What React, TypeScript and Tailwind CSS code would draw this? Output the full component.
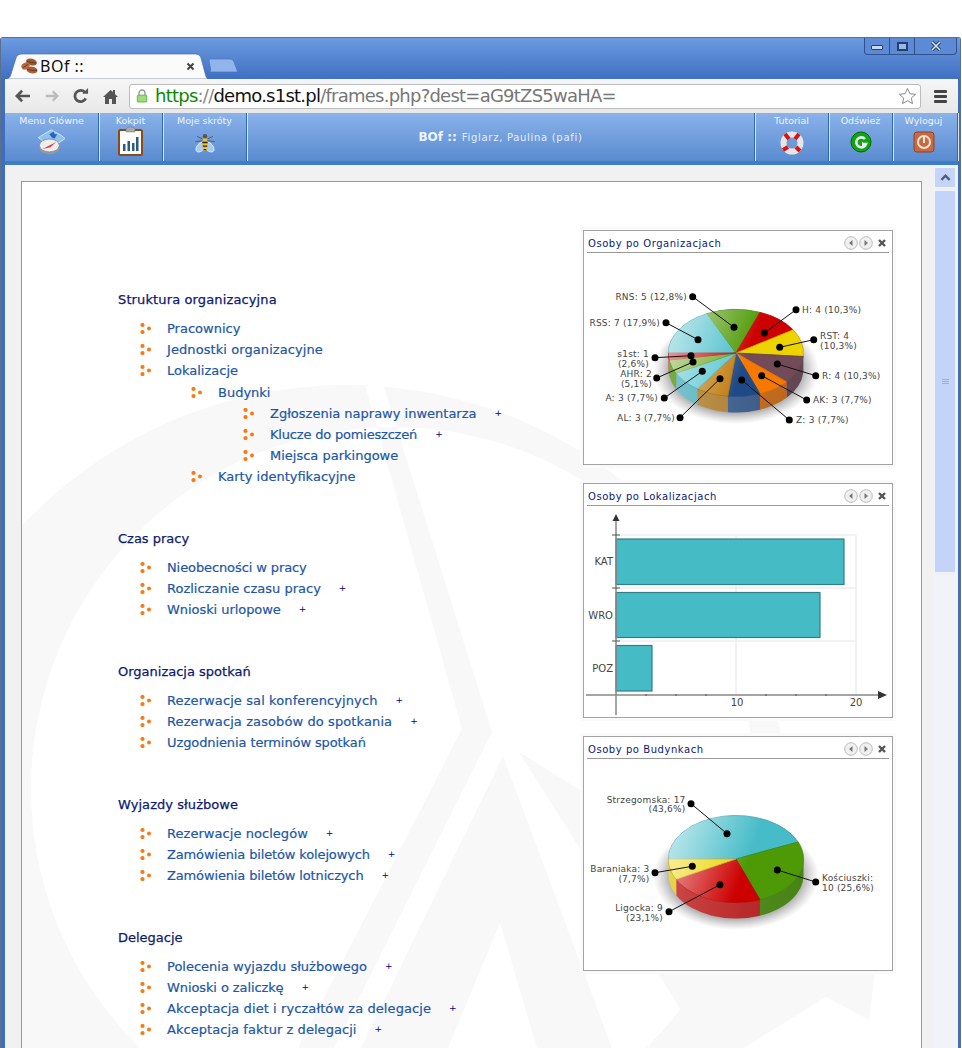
import React from "react";

const F = "font-['DejaVu_Sans',sans-serif]";

function polar(cx: number, cy: number, rx: number, ry: number, deg: number) {
  const t = (deg * Math.PI) / 180;
  return [cx + rx * Math.cos(t), cy + ry * Math.sin(t)];
}

type Slice = { v: number; top: string; side: string; stroke: string };
type Lab = { lines: string[]; x: number; ys: number[]; end?: boolean; d: [number, number]; to: [number, number] };

function Pie({ id, cy, slices, labels }: { id: string; cy: number; slices: Slice[]; labels: Lab[] }) {
  const cx = 736, rx = 67.5, ry = 43.5, depth = 16;
  const total = slices.reduce((a, s) => a + s.v, 0);
  let ang = 180;
  const segs = slices.map((s) => {
    const a0 = ang;
    const a1 = ang + (s.v / total) * 360;
    ang = a1;
    return { ...s, a0, a1 };
  });
  const sidePath = (a0: number, a1: number) => {
    const [x0, y0] = polar(cx, cy, rx, ry, a0);
    const [x1, y1] = polar(cx, cy, rx, ry, a1);
    return `M${x0} ${y0}A${rx} ${ry} 0 0 1 ${x1} ${y1}L${x1} ${y1 + depth}A${rx} ${ry} 0 0 0 ${x0} ${y0 + depth}Z`;
  };
  return (
    <>
      <defs>
        <radialGradient id={id + "s"} cx="50%" cy="50%" r="50%">
          <stop offset="70%" stopColor="#555" stopOpacity="0.75" />
          <stop offset="100%" stopColor="#888" stopOpacity="0" />
        </radialGradient>
        <linearGradient id={id + "g"} gradientUnits="userSpaceOnUse" x1="668" y1={cy - 20} x2="745" y2={cy + 10}>
          <stop offset="0%" stopColor="#fff" stopOpacity="0.65" />
          <stop offset="100%" stopColor="#fff" stopOpacity="0" />
        </linearGradient>
        <linearGradient id={id + "w"} x1="0" y1="0" x2="1" y2="0">
          <stop offset="0%" stopColor="#fff" stopOpacity="0.18" />
          <stop offset="100%" stopColor="#000" stopOpacity="0.08" />
        </linearGradient>
      </defs>
      <ellipse cx={cx} cy={cy + 17} rx={83} ry={54} fill={`url(#${id}s)`} />
      {segs.map((s, i) => {
        const a0 = Math.max(s.a0, 360);
        const a1 = Math.min(s.a1, 540);
        if (a1 <= a0) return null;
        return <path key={i} d={sidePath(a0, a1)} fill={s.side} />;
      })}
      <path d={sidePath(360, 540)} fill={`url(#${id}w)`} />
      {segs.map((s, i) => {
        const [x0, y0] = polar(cx, cy, rx, ry, s.a0);
        const [x1, y1] = polar(cx, cy, rx, ry, s.a1);
        const large = s.a1 - s.a0 > 180 ? 1 : 0;
        return (
          <path
            key={i}
            d={`M${cx} ${cy}L${x0} ${y0}A${rx} ${ry} 0 ${large} 1 ${x1} ${y1}Z`}
            fill={s.top}
            stroke={s.stroke}
            strokeWidth="0.8"
          />
        );
      })}
      <ellipse cx={cx} cy={cy} rx={rx} ry={ry} fill={`url(#${id}g)`} />
      {labels.map((l, i) => (
        <g key={i}>
          <line x1={l.d[0]} y1={l.d[1]} x2={l.to[0]} y2={l.to[1]} stroke="#111" strokeWidth="1" />
          <circle cx={l.d[0]} cy={l.d[1]} r="3.5" fill="#000" />
          <circle cx={l.to[0]} cy={l.to[1]} r="3.5" fill="#000" />
          {l.lines.map((t, j) => (
            <text key={j} x={l.x} y={l.ys[j]} textAnchor={l.end ? "end" : "start"} fontSize="9" fill="#444" fontFamily="'DejaVu Sans',sans-serif" className="tracking-[0.2px]">
              {t}
            </text>
          ))}
        </g>
      ))}
    </>
  );
}

function Nav({ dir }: { dir: "l" | "r" }) {
  return (
    <svg width="14" height="14" viewBox="0 0 14 14">
      <circle cx="7" cy="7" r="6.3" fill="#f0f0f0" stroke="#bbb" />
      <path d={dir === "l" ? "M8.5 4v6L5 7z" : "M5.5 4v6L9 7z"} fill="#777" />
    </svg>
  );
}

function Card({ title, viewBox, children }: { title: string; viewBox: string; children: React.ReactNode }) {
  return (
    <div className="w-[310px] h-[235px] border border-[#a3a3a3] bg-white px-[3px] flex flex-col shadow-[0_0_0_3px_#fafafa]">
      <div className="h-[21px] mt-px border-b border-[#999] flex items-center justify-between pl-px pr-[2px]">
        <span className={`${F} text-[10px] tracking-[0.55px] text-[#0a1a7a] leading-none pt-[4px]`}>{title}</span>
        <span className="flex items-center gap-[1px] mt-[2px]">
          <Nav dir="l" />
          <Nav dir="r" />
          <svg width="10" height="10" viewBox="0 0 10 10" className="ml-[3px]">
            <path d="M2 2l6 6M8 2l-6 6" stroke="#555" strokeWidth="2.4" />
          </svg>
        </span>
      </div>
      <svg viewBox={viewBox} className="w-[308px] h-[211px] block -mx-[3px]">
        {children}
      </svg>
    </div>
  );
}

function Bullet() {
  return (
    <svg width="11" height="11" viewBox="0 0 11 11" className="shrink-0">
      <circle cx="2.5" cy="2" r="2.1" fill="#f97a10" />
      <circle cx="2.5" cy="9" r="2.1" fill="#f97a10" />
      <circle cx="9" cy="5.5" r="2" fill="#f97a10" />
    </svg>
  );
}

function Item({ text, plus, level = 0, tw = "" }: { text: string; plus?: boolean; level?: 0 | 1 | 2; tw?: string }) {
  const indent = level === 0 ? "pl-[22px]" : level === 1 ? "pl-[73px]" : "pl-[125px]";
  return (
    <div className={`${indent} gap-[16px] h-[21px] flex items-center`}>
      <Bullet />
      <span className={`${F} ${tw} text-[13px] leading-[21px] text-[#2156a6] [-webkit-text-stroke:0.2px_#2156a6] whitespace-nowrap`}>{text}</span>
      {plus && <span className={`${F} text-[9px] leading-none text-[#00007f] ml-[2px]`}>+</span>}
    </div>
  );
}

function Section({ title, children, tw = "" }: { title: string; children: React.ReactNode; tw?: string }) {
  return (
    <div className="mb-[41px]">
      <div className={`${F} ${tw} text-[13px] leading-[21px] text-[#0b1a70] [-webkit-text-stroke:0.25px_#0b1a70] mb-[8px] whitespace-nowrap`}>{title}</div>
      {children}
    </div>
  );
}

function Cell({ w, label, children }: { w: string; label: string; children: React.ReactNode }) {
  return (
    <div className={`${w} h-[48px] flex flex-col items-center pt-px border-r border-r-[#2f67b5] shadow-[1px_0_0_#dbe7f7]`}>
      <span className={`${F} text-[9.5px] leading-[14px] text-[#eef4fc] whitespace-nowrap`}>{label}</span>
      <span className="block">{children}</span>
    </div>
  );
}

export default function App() {
  const org: Slice[] = [
    { v: 7, top: "#45bcc8", side: "#5bb7c2", stroke: "#3aa0ac" },
    { v: 5, top: "#4f9a06", side: "#4f9a06", stroke: "#3f8a06" },
    { v: 4, top: "#cc0000", side: "#b22", stroke: "#cc0000" },
    { v: 4, top: "#edd400", side: "#d6c100", stroke: "#c4a000" },
    { v: 4, top: "#724a58", side: "#6a4c5a", stroke: "#644" },
    { v: 3, top: "#f57900", side: "#cf6f1c", stroke: "#e57000" },
    { v: 3, top: "#204a87", side: "#3b5f92", stroke: "#204a87" },
    { v: 3, top: "#c17d11", side: "#b88532", stroke: "#a86c0e" },
    { v: 3, top: "#55c5d2", side: "#5bb9c6", stroke: "#42a5b2" },
    { v: 2, top: "#6aa820", side: "#5c9a1a", stroke: "#4f8a06" },
    { v: 1, top: "#cc0000", side: "#c22", stroke: "#a00" },
  ];
  const bud: Slice[] = [
    { v: 17, top: "#45bcc8", side: "#5bb7c2", stroke: "#3aa0ac" },
    { v: 10, top: "#4e9a06", side: "#4f8f18", stroke: "#3f8a06" },
    { v: 9, top: "#cc0000", side: "#c42222", stroke: "#b00" },
    { v: 3, top: "#edd400", side: "#e2cb20", stroke: "#c4a000" },
  ];
  const orgL: Lab[] = [
    { lines: ["RNS: 5 (12,8%)"], x: 687, ys: [300], end: true, d: [692.7, 296.7], to: [734, 327.3] },
    { lines: ["H: 4 (10,3%)"], x: 802, ys: [313], d: [796, 309.7], to: [764.3, 333] },
    { lines: ["RST: 4", "(10,3%)"], x: 820, ys: [339, 349], d: [813.7, 339.7], to: [779.7, 347.3] },
    { lines: ["R: 4 (10,3%)"], x: 822, ys: [379], d: [815.7, 375.7], to: [777.3, 364] },
    { lines: ["AK: 3 (7,7%)"], x: 813, ys: [403], d: [806.7, 400], to: [761.7, 375.7] },
    { lines: ["Z: 3 (7,7%)"], x: 796, ys: [423], d: [789.3, 420], to: [741.7, 380] },
    { lines: ["AL: 3 (7,7%)"], x: 675, ys: [421], end: true, d: [680, 417.7], to: [720, 378.7] },
    { lines: ["A: 3 (7,7%)"], x: 658, ys: [401], end: true, d: [664.3, 398], to: [702.3, 371.3] },
    { lines: ["AHR: 2", "(5,1%)"], x: 652, ys: [377, 387], end: true, d: [656.7, 378], to: [693, 362] },
    { lines: ["s1st: 1", "(2,6%)"], x: 649, ys: [357, 367], end: true, d: [655, 357.7], to: [691, 355.7] },
    { lines: ["RSS: 7 (17,9%)"], x: 660, ys: [326], end: true, d: [666, 322.7], to: [698, 339.7] },
  ];
  const budL: Lab[] = [
    { lines: ["Strzegomska: 17", "(43,6%)"], x: 685.5, ys: [803, 812], end: true, d: [691, 803.7], to: [727, 833.7] },
    { lines: ["Kościuszki:", "10 (25,6%)"], x: 822, ys: [881, 891], d: [815.7, 882], to: [777.3, 870] },
    { lines: ["Baraniaka: 3", "(7,7%)"], x: 649.5, ys: [872, 882], end: true, d: [655, 872.7], to: [692.3, 866.3] },
    { lines: ["Ligocka: 9", "(23,1%)"], x: 663, ys: [911, 921], end: true, d: [669, 911.7], to: [720, 884.7] },
  ];

  return (
    <div className="w-[962px] h-[1048px] overflow-hidden bg-white pt-[37px]">
      <div className="h-[1011px] mr-px border border-b-0 border-[#5c6f8c] rounded-t-[3px] bg-[#3f6ebd] flex flex-col">
        {/* title bar */}
        <div className="h-[41px] shrink-0 bg-gradient-to-b from-[#6c9be0] to-[#3f6fc2] flex pl-[4px] pr-[3px]">
          <div className="relative w-[203px] h-[26px] mt-[15px] flex items-center pl-[16px]">
            <svg width="203" height="26" viewBox="0 0 203 26" className="absolute left-0 top-0">
              <path d="M0 26C3 26 5 25 6 21L11 5C12 2 14 1 18 1H190C193 1 195 2 196 5L200 20C201 24 202 26 203 26Z" fill="#fbfbfb" stroke="#3c62a8" strokeWidth="0.6" />
            </svg>
            <svg width="17" height="16" viewBox="0 0 17 16" className="relative mr-[2px]">
              <ellipse cx="10.500" cy="4" rx="5.500" ry="3.400" fill="#9b5a33" transform="rotate(15 10.500 4)" />
              <ellipse cx="4.500" cy="8" rx="4.300" ry="3.300" fill="#b5693f" transform="rotate(-25 4.500 8)" />
              <ellipse cx="11" cy="12" rx="5.500" ry="3.400" fill="#a66038" transform="rotate(10 11 12)" />
              <path d="M6 3.500q4 1 9 1.500M2 9.500q3-2 5-3M6 11.500q4 1 10 1" stroke="#5d3219" strokeWidth="0.800" fill="none" />
            </svg>
            <span className="relative font-['Noto_Sans',sans-serif] text-[16px] tracking-[0.5px] leading-none text-[#111]">BOf ::</span>
            <svg width="9" height="9" viewBox="0 0 9 9" className="absolute left-[181px] top-[9px]">
              <path d="M1.500 1.500l6 6M7.500 1.500l-6 6" stroke="#444" strokeWidth="2" />
            </svg>
          </div>
          <svg width="31" height="15" viewBox="0 0 31 15" className="mt-[20px]">
            <path d="M1 14C2 14 3 13 2.500 10L1 3C1 1 2 1 4 1H22C24 1 25 2 26 4L29 12C29.500 14 30 14 30 14Z" fill="#8fb5ec" stroke="#4a74bd" strokeWidth="0.7" />
          </svg>
          <div className="ml-auto flex h-[17px] border border-t-0 border-[#30518e] rounded-b-[4px] bg-[#5d8ad4]">
            <div className="w-[25px] flex items-center justify-center border-r border-[#30518e]">
              <div className="w-[12px] h-[5px] border border-[#24406f] bg-[#c9d8f0] rounded-[1px] mt-[3px]" />
            </div>
            <div className="w-[25px] flex items-center justify-center border-r border-[#30518e]">
              <div className="w-[11px] h-[9px] border-2 border-[#24406f] bg-[#9ab9e8]" />
            </div>
            <div className="w-[41px] flex items-center justify-center">
              <svg width="12" height="10" viewBox="0 0 12 10">
                <path d="M2 1l8 8M10 1l-8 8" stroke="#24406f" strokeWidth="3.4" />
                <path d="M2 1l8 8M10 1l-8 8" stroke="#dce6f6" strokeWidth="1.5" />
              </svg>
            </div>
          </div>
        </div>
        {/* frame body */}
        <div className="flex-1 pl-[4px] pr-[2px] flex flex-col min-h-0">
          {/* toolbar */}
          <div className="h-[34px] shrink-0 bg-gradient-to-b from-[#f6f6f6] to-[#e8e8e8] flex items-center pl-[10px] pr-[11px]">
            <svg width="16" height="14" viewBox="0 0 18 16">
              <path d="M8 2L2 8l6 6M2.500 8H17" stroke="#555" strokeWidth="3" fill="none" />
            </svg>
            <svg width="14" height="14" viewBox="0 0 18 16" className="ml-[14px]">
              <path d="M10 2l6 6-6 6M15.500 8H1" stroke="#bbb" strokeWidth="3" fill="none" />
            </svg>
            <svg width="16" height="16" viewBox="0 0 17 17" className="ml-[14px]">
              <path d="M13.500 11A6 6 0 1 1 12.500 4.500" stroke="#555" strokeWidth="3" fill="none" />
              <path d="M10 6h6V0z" fill="#555" />
            </svg>
            <svg width="15" height="15" viewBox="0 0 15 15" className="ml-[14px]">
              <path d="M7.500 1L0 8h2v7h4v-5h3v5h4V8h2l-3-3V1h-2v2z" fill="#555" />
            </svg>
            <div className="ml-[11px] w-[792px] h-[25px] bg-white border border-[#bcbcbc] rounded-[3px] flex items-center pl-[6px] pr-[3px] shrink-0">
              <svg width="12" height="16" viewBox="0 0 14 16" className="mr-[7px] shrink-0">
                <path d="M3.500 7V4.500a3.500 3.500 0 0 1 7 0V7" stroke="#9a9a9a" strokeWidth="1.6" fill="none" />
                <rect x="1.500" y="7" width="11" height="8" rx="1" fill="#9fdb7a" stroke="#5ea544" />
              </svg>
              <span className={`${F} text-[18px] leading-none whitespace-nowrap tracking-[-0.76px]`}>
                <span className="text-[#0a8a00]">https</span>
                <span className="text-[#888]">://</span>
                <span className="text-[#111]">demo.s1st.pl</span>
                <span className="text-[#777]">/frames.php?dest=aG9tZS5waHA=</span>
              </span>
              <svg width="19" height="18" viewBox="0 0 19 18" className="ml-auto">
                <path d="M9.500 1.500l2.400 5.200 5.600.6-4.200 3.800 1.200 5.500-5-2.900-5 2.900 1.200-5.500L1.500 7.300l5.600-.6z" fill="#fff" stroke="#888" />
              </svg>
            </div>
            <div className="ml-auto flex flex-col gap-[2px]">
              <div className="w-[13px] h-[3px] bg-[#444] rounded-[1px]" />
              <div className="w-[13px] h-[3px] bg-[#444] rounded-[1px]" />
              <div className="w-[13px] h-[3px] bg-[#444] rounded-[1px]" />
            </div>
          </div>
          {/* app header */}
          <div className="h-[52px] shrink-0 bg-gradient-to-b from-[#8ab2ea] to-[#5a8bd0] border-b-[4px] border-b-[#3f7dc2] flex">
            <Cell w="w-[94px]" label="Menu Główne">
              <svg width="32" height="26" viewBox="0 0 34 30" className="mt-[1px]">
                <path d="M1 10L16 1l11 6 5 4-14 10z" fill="#8cc1f0" stroke="#dceaf8" />
                <path d="M14 6l5-3 1 3 3 0-3 5-3-1z" fill="#2a62c4" />
                <ellipse cx="14" cy="21" rx="12" ry="8" fill="#9a9a9a" />
                <ellipse cx="14" cy="19" rx="11.500" ry="7.500" fill="#eee" stroke="#888" />
                <path d="M6 23L22 15l-7 6z" fill="#d33" />
              </svg>
            </Cell>
            <Cell w="w-[64px]" label="Kokpit">
              <svg width="25" height="30" viewBox="0 0 25 30" className="-mt-[2px]">
                <rect x="1" y="4" width="23" height="25" rx="1.500" fill="#fff" stroke="#8a4a1a" strokeWidth="2" />
                <path d="M8 4q0-3 4.500-3T17 4v2H8z" fill="#aaa" stroke="#777" strokeWidth="0.5" />
                <path d="M5 25v-7h2.500v7zM9.500 25V15H12v10zM14 25v-8h2.500v8zM18 25V11h2.500v14z" fill="#2c5a82" />
              </svg>
            </Cell>
            <Cell w="w-[84px]" label="Moje skróty">
              <svg width="22" height="23" viewBox="0 0 24 26" className="mt-[3px]">
                <path d="M12 12C5 12 1 18 2 22c1 3 7 2 10-3 3 5 9 6 10 3 1-4-3-10-10-10z" fill="#a9ccf2" stroke="#e5effa" />
                <ellipse cx="12" cy="15" rx="3" ry="8" fill="#f0c020" />
                <path d="M9 13h6M9.500 17h5M10.500 21h3" stroke="#222" strokeWidth="1.500" />
                <circle cx="12" cy="6" r="2.500" fill="#555" />
                <path d="M3 6l6 3M21 6l-6 3M1 12l8-1M23 12l-8-1" stroke="#444" strokeWidth="0.800" />
              </svg>
            </Cell>
            <div className="flex-1 flex items-center justify-center border-r border-r-[#2f67b5] shadow-[1px_0_0_#dbe7f7] h-[48px] pt-[0px]">
              <span className={`${F} text-[12px] font-bold text-[#eef4fc] mr-[5px]`}>BOf ::</span>
              <span className={`${F} text-[10px] tracking-[0.7px] text-[#e6eefb]`}>Figlarz, Paulina (pafi)</span>
            </div>
            <Cell w="w-[74px]" label="Tutorial">
              <svg width="24" height="24" viewBox="0 0 24 24" className="mt-[3px]">
                <circle cx="12" cy="12" r="8.500" fill="none" stroke="#e6e6e6" strokeWidth="6" />
                <path d="M5 3l4 5M19 3l-4 5M3 19l5-3M20 20l-4-4" stroke="#dd1111" strokeWidth="4" />
              </svg>
            </Cell>
            <Cell w="w-[64px]" label="Odśwież">
              <svg width="22" height="22" viewBox="0 0 22 22" className="mt-[3px]">
                <circle cx="11" cy="11" r="10" fill="#0ea80e" stroke="#066406" />
                <path d="M15 8a5 5 0 1 0 1 5h-4" stroke="#eef" strokeWidth="2.600" fill="none" />
                <path d="M12 10.500v5l4 0z" fill="#eef" />
              </svg>
            </Cell>
            <Cell w="w-[65px] pr-[3px]" label="Wyloguj">
              <svg width="22" height="22" viewBox="0 0 22 22" className="mt-[3px]">
                <rect x="1" y="1" width="20" height="20" rx="3" fill="#c8693f" stroke="#964023" />
                <circle cx="11" cy="11" r="6" fill="none" stroke="#f5e3d8" strokeWidth="2" />
                <path d="M11 6v6" stroke="#f5e3d8" strokeWidth="2" />
              </svg>
            </Cell>
          </div>
          {/* content */}
          <div className="flex-1 min-h-0 bg-[#f1f1f1] flex">
            <div className="ml-[16px] mt-[16px] w-[901px] h-[900px] shrink-0 border border-[#8e9bab] bg-white relative overflow-hidden">
              <svg viewBox="22 182 899 866" className="absolute left-0 top-0 w-[899px] h-[866px]">
                <path
                  fillRule="evenodd"
                  fill="#f8f8f8"
                  d="M-98.500 830a445 445 0 1 0 890 0a445 445 0 1 0-890 0ZM31 789a362 362 0 1 0 724 0a362 362 0 1 0-724 0ZM365 385L384 387L492 732L334 1048L298 1048L462 729Z"
                />
                <path fill="#f8f8f8" fillRule="evenodd" d="M503 756L612 1048H361ZM500 923L448 1048H537Z" />
                <path fill="#f8f8f8" d="M519 752L875 973L869 1020L826 997L744 1048H705Z" />
              </svg>
              <div className="relative flex">
                <div className="w-[561px] shrink-0 pl-[96px] pt-[107px]">
                  <Section title="Struktura organizacyjna" tw="tracking-[0.13px]">
                    <Item text="Pracownicy" />
                    <Item text="Jednostki organizacyjne" tw="tracking-[0.08px]" />
                    <Item text="Lokalizacje" />
                    <div className="h-px" />
                    <Item text="Budynki" level={1} />
                    <Item text="Zgłoszenia naprawy inwentarza" level={2} plus />
                    <Item text="Klucze do pomieszczeń" level={2} plus tw="tracking-[-0.19px]" />
                    <Item text="Miejsca parkingowe" level={2} />
                    <Item text="Karty identyfikacyjne" level={1} />
                  </Section>
                  <Section title="Czas pracy">
                    <Item text="Nieobecności w pracy" tw="tracking-[-0.1px]" />
                    <Item text="Rozliczanie czasu pracy" plus />
                    <Item text="Wnioski urlopowe" plus tw="tracking-[-0.06px]" />
                  </Section>
                  <Section title="Organizacja spotkań">
                    <Item text="Rezerwacje sal konferencyjnych" plus tw="tracking-[0.1px]" />
                    <Item text="Rezerwacja zasobów do spotkania" plus tw="tracking-[0.1px]" />
                    <Item text="Uzgodnienia terminów spotkań" tw="tracking-[-0.1px]" />
                  </Section>
                  <Section title="Wyjazdy służbowe" tw="tracking-[0.06px]">
                    <Item text="Rezerwacje noclegów" plus tw="tracking-[0.05px]" />
                    <Item text="Zamówienia biletów kolejowych" plus tw="tracking-[-0.14px]" />
                    <Item text="Zamówienia biletów lotniczych" plus tw="tracking-[-0.14px]" />
                  </Section>
                  <Section title="Delegacje">
                    <Item text="Polecenia wyjazdu służbowego" plus />
                    <Item text="Wnioski o zaliczkę" plus tw="tracking-[-0.1px]" />
                    <Item text="Akceptacja diet i ryczałtów za delegacje" plus tw="tracking-[0.08px]" />
                    <Item text="Akceptacja faktur z delegacji" plus tw="tracking-[0.05px]" />
                  </Section>
                </div>
                <div className="pt-[48px] flex flex-col gap-[18px]">
                  <Card title="Osoby po Organizacjach" viewBox="584 253 308 211">
                    <Pie id="a" cy={353} slices={org} labels={orgL} />
                  </Card>
                  <Card title="Osoby po Lokalizacjach" viewBox="584 506 308 211">
                    <path d="M736 535V695M856 535V695M616 535H856M616 588H856M616 641H856" stroke="#e6e6ec" strokeWidth="1" fill="none" />
                    <rect x="616" y="539" width="228" height="45.500" fill="#45bcc5" stroke="#2e7f88" strokeWidth="1.200" />
                    <rect x="616" y="592.500" width="204" height="45" fill="#45bcc5" stroke="#2e7f88" strokeWidth="1.200" />
                    <rect x="616" y="645.500" width="36" height="45.500" fill="#45bcc5" stroke="#2e7f88" strokeWidth="1.200" />
                    <path d="M616 520V715M586 695H878" stroke="#888" strokeWidth="1.500" />
                    <path d="M612 535h8M612 588h8M612 641h8" stroke="#555" />
                    <path d="M646 694v2M676 694v2M706 694v2M766 694v2M796 694v2M826 694v2" stroke="#555" />
                    <path d="M616 514l-3.500 7h7zM887 695l-9-4v8z" fill="#333" />
                    <g fontSize="10" fill="#444" fontFamily="'DejaVu Sans',sans-serif">
                      <text x="613" y="565" textAnchor="end">KAT</text>
                      <text x="613" y="619" textAnchor="end">WRO</text>
                      <text x="613" y="672" textAnchor="end">POZ</text>
                      <text x="737" y="706" textAnchor="middle">10</text>
                      <text x="856" y="706" textAnchor="middle">20</text>
                    </g>
                  </Card>
                  <Card title="Osoby po Budynkach" viewBox="584 759 308 211">
                    <Pie id="b" cy={859} slices={bud} labels={budL} />
                  </Card>
                </div>
              </div>
            </div>
            <div className="ml-[12px] w-[22px] shrink-0 flex flex-col items-stretch pt-[2px] gap-[2px]">
              <div className="h-[21px] bg-[#c5d5f8] border border-[#eef2fb] rounded-[2px] flex items-center justify-center">
                <svg width="11" height="7" viewBox="0 0 9 6"><path d="M1 5l3.500-3.500L8 5" stroke="#4a5f80" strokeWidth="2" fill="none" /></svg>
              </div>
              <div className="h-[383px] bg-[#c3d4f8] border border-[#eef2fb] rounded-[2px] flex items-center justify-center">
                <div className="flex flex-col gap-px">
                  <div className="w-[7px] h-px bg-[#9eb0d4]" />
                  <div className="w-[7px] h-px bg-[#9eb0d4]" />
                  <div className="w-[7px] h-px bg-[#9eb0d4]" />
                </div>
              </div>
              <div className="flex-1 bg-[#f1f3f8]" />
            </div>
          </div>
        </div>
      </div>
    </div>
  );
}
